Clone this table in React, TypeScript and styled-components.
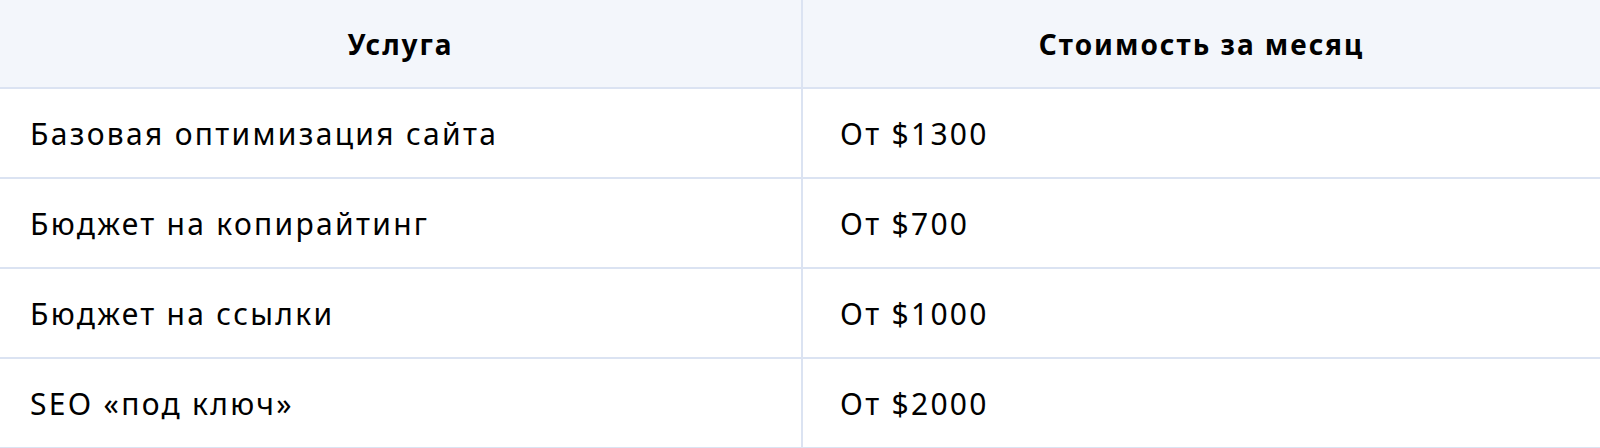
import React from "react";
import styled, { createGlobalStyle } from "styled-components";

const Global = createGlobalStyle`
  html, body { margin: 0; padding: 0; background: #ffffff; }
  body { font-family: "Noto Sans", "Open Sans", sans-serif; color: #000; }
`;

const Table = styled.table`
  width: 1600px;
  border-collapse: collapse;
  table-layout: fixed;
  font-family: "Noto Sans", sans-serif;
`;

const HeadCell = styled.th<{ $last?: boolean }>`
  height: 87px;
  padding: 0;
  background: #f3f6fb;
  font-size: 28px;
  font-weight: 700;
  letter-spacing: 2px;
  text-align: center;
  border-bottom: 2px solid #dbe3f2;
  border-right: ${(p) => (p.$last ? "none" : "2px solid #dbe3f2")};
`;

const Cell = styled.td<{ $last?: boolean; $pad: number }>`
  height: 88px;
  padding: 0 0 0 ${(p) => p.$pad}px;
  font-size: 30px;
  font-weight: 400;
  letter-spacing: 2.3px;
  text-align: left;
  border-bottom: 2px solid #dbe3f2;
  border-right: ${(p) => (p.$last ? "none" : "2px solid #dbe3f2")};
`;

const rows = [
  ["Базовая оптимизация сайта", "От $1300"],
  ["Бюджет на копирайтинг", "От $700"],
  ["Бюджет на ссылки", "От $1000"],
  ["SEO «под ключ»", "От $2000"],
];

export default function App() {
  return (
    <>
      <Global />
      <Table>
        <colgroup>
          <col style={{ width: 802 }} />
          <col />
        </colgroup>
        <thead>
          <tr>
            <HeadCell>Услуга</HeadCell>
            <HeadCell $last>Стоимость за месяц</HeadCell>
          </tr>
        </thead>
        <tbody>
          {rows.map(([a, b]) => (
            <tr key={a}>
              <Cell $pad={30}>{a}</Cell>
              <Cell $pad={37} $last>{b}</Cell>
            </tr>
          ))}
        </tbody>
      </Table>
    </>
  );
}
